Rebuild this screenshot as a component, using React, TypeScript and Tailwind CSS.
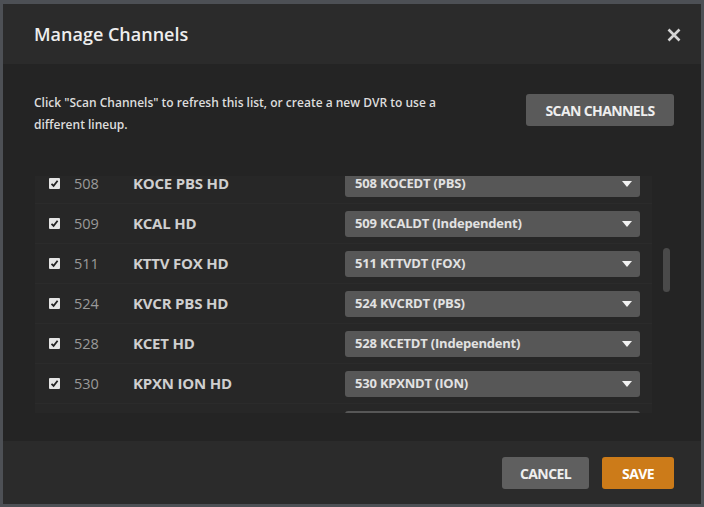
import React from "react";

const rows = [
  { n: "508", name: "KOCE PBS HD", sel: "508 KOCEDT (PBS)" },
  { n: "509", name: "KCAL HD", sel: "509 KCALDT (Independent)" },
  { n: "511", name: "KTTV FOX HD", sel: "511 KTTVDT (FOX)" },
  { n: "524", name: "KVCR PBS HD", sel: "524 KVCRDT (PBS)" },
  { n: "528", name: "KCET HD", sel: "528 KCETDT (Independent)" },
  { n: "530", name: "KPXN ION HD", sel: "530 KPXNDT (ION)" },
  { n: "532", name: "KWHY HD", sel: "532 KWHYDT (MundoFox)" },
];

function Check() {
  return (
    <div className="w-[11px] h-[11px] rounded-[1px] bg-[#e4e4e4] flex items-center justify-center">
      <svg width="9" height="9" viewBox="0 0 9 9">
        <path d="M1.5 4.8 L3.6 6.9 L7.6 1.8" fill="none" stroke="#222" strokeWidth="1.8" />
      </svg>
    </div>
  );
}

export default function App() {
  return (
    <div
      className="w-[704px] h-[507px] bg-[#4d5055] pt-[4px] pl-[3px] pr-[3px] pb-[3px]"
      style={{ fontFamily: '"Open Sans", "Noto Sans", sans-serif' }}
    >
      <div className="flex flex-col h-full">
        <div className="h-[60px] bg-[#2b2b2b] flex items-center justify-between pl-[31px] pr-[20px]">
          <div className="text-[18px] font-semibold text-[#eeeeee]">Manage Channels</div>
          <svg width="14" height="14" viewBox="0 0 14 14" className="mt-[1px]">
            <path d="M1.5 1.5 L12.5 12.5 M12.5 1.5 L1.5 12.5" stroke="#d4d4d4" strokeWidth="2.6" />
          </svg>
        </div>
        <div className="flex-1 bg-[#242424] flex flex-col">
          <div className="flex justify-between items-start pt-[28px] pl-[31px] pr-[27px]">
            <div className="w-[420px] text-[12px] leading-[22px] font-semibold text-[#dddddd]">
              Click "Scan Channels" to refresh this list, or create a new DVR to use a different lineup.
            </div>
            <div className="mt-[2px] h-[32px] w-[148px] rounded-[3px] bg-[#5a5a5a] flex items-center justify-center text-[14px] font-bold text-[#eeeeee] tracking-[-0.6px]">
              SCAN CHANNELS
            </div>
          </div>
          <div className="flex mt-[40px] pl-[32px]">
            <div className="w-[617px] h-[237px] overflow-hidden bg-[#272727]">
              <div className="mt-[-12px]">
                {rows.map((r) => (
                  <div key={r.n} className="h-[40px] flex items-center border-b border-[#2b2b2b]">
                    <div className="ml-[14px]">
                      <Check />
                    </div>
                    <div className="ml-[14px] w-[59px] text-[14.5px] text-[#9a9a9a]">{r.n}</div>
                    <div className="w-[212px] text-[15px] font-bold text-[#cfcfcf] tracking-[-0.2px]">{r.name}</div>
                    <div className="h-[26px] w-[295px] rounded-[3px] bg-[#575757] flex items-center justify-between pl-[10px] pr-[8px]">
                      <span className="text-[13px] font-bold text-[#e2e2e2] tracking-[-0.2px]">{r.sel}</span>
                      <svg width="10" height="6" viewBox="0 0 10 6">
                        <path d="M0 0 L10 0 L5 6 Z" fill="#f2f2f2" />
                      </svg>
                    </div>
                  </div>
                ))}
              </div>
            </div>
            <div className="ml-[11px] w-[7px]">
              <div className="mt-[72px] h-[44px] rounded-full bg-[#4a4a4a]" />
            </div>
          </div>
        </div>
        <div className="h-[63px] bg-[#2b2b2b] flex items-start justify-end gap-[13px] pt-[16px] pr-[27px]">
          <div className="h-[32px] w-[87px] rounded-[3px] bg-[#5f5f5f] flex items-center justify-center text-[14px] font-bold text-[#eeeeee] tracking-[-0.6px]">
            CANCEL
          </div>
          <div className="h-[32px] w-[72px] rounded-[3px] bg-[#cc7b19] flex items-center justify-center text-[14px] font-bold text-[#ffffff] tracking-[-0.6px]">
            SAVE
          </div>
        </div>
      </div>
    </div>
  );
}
